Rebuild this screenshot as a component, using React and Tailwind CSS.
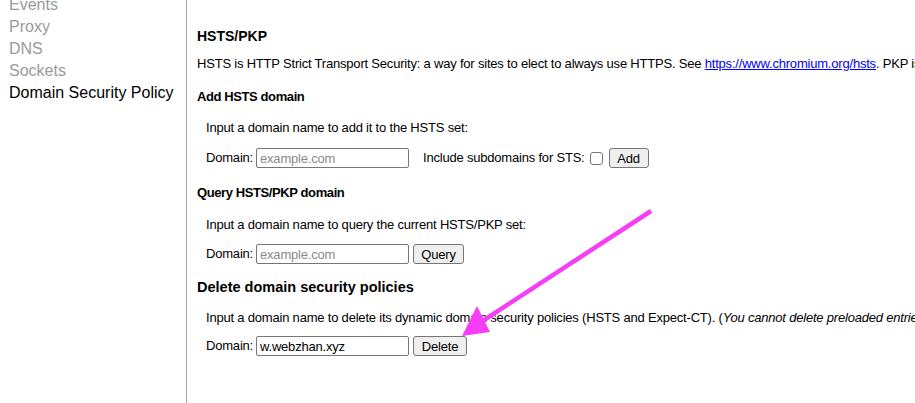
import React from "react";

const navItems = ["Events", "Proxy", "DNS", "Sockets", "Domain Security Policy"];

function DomainRow({ value, placeholder, className = "mt-[12px]", children }) {
  return (
    <div className={"flex h-[20px] items-center " + className}>
      <span className="mr-[3px]">Domain:</span>
      <input
        className="h-[20px] w-[153px] rounded-[2px] border border-[#767676] px-[3px] text-[13px] text-black outline-none placeholder:text-[#8a8a8a]"
        placeholder={placeholder}
        defaultValue={value}
      />
      {children}
    </div>
  );
}

function Btn({ label, className = "" }) {
  return (
    <button
      className={
        "ml-[4px] h-[20px] rounded-[3px] border border-[#767676] bg-[#efefef] px-[6px] text-[13px] leading-none text-black " +
        className
      }
    >
      {label}
    </button>
  );
}

export default function App() {
  return (
    <div
      className="relative flex h-[403px] w-[915px] overflow-hidden bg-white text-black"
      style={{ fontFamily: '"Liberation Sans", Arial, sans-serif' }}
    >
      <nav className="w-[187px] shrink-0 border-r border-[#a8a8a8]">
        <ul className="-mt-[6px] pl-[9px] text-[16px] leading-[22px]">
          {navItems.map((item, i) => (
            <li
              key={item}
              className={i === navItems.length - 1 ? "text-black" : "text-[#9a9a9a]"}
            >
              {item}
            </li>
          ))}
        </ul>
      </nav>

      <main className="min-w-0 flex-1 overflow-hidden pl-[10px] pt-[28px] text-[13px] leading-[16px] tracking-[-0.2px]">
        <h2 className="text-[14px] font-bold leading-[17px] tracking-normal">HSTS/PKP</h2>
        <p className="mt-[11px] whitespace-nowrap">
          HSTS is HTTP Strict Transport Security: a way for sites to elect to always use HTTPS. See{" "}
          <a href="#" className="text-[#0000ee] underline">
            https://www.chromium.org/hsts
          </a>
          . PKP is Public Key Pinning: Chrome "pins" certain sites to certain certificates.
        </p>

        <h3 className="mt-[17px] font-bold tracking-[-0.4px]">Add HSTS domain</h3>
        <div className="pl-[9px]">
          <p className="mt-[15px]">Input a domain name to add it to the HSTS set:</p>
          <DomainRow placeholder="example.com">
            <span className="ml-[14px]">Include subdomains for STS:</span>
            <span className="ml-[5px] h-[13px] w-[13px] rounded-[3px] border border-[#767676] bg-white" />
            <Btn label="Add" className="ml-[6px] w-[40px]" />
          </DomainRow>
        </div>

        <h3 className="mt-[17px] font-bold tracking-[-0.4px]">Query HSTS/PKP domain</h3>
        <div className="pl-[9px]">
          <p className="mt-[16px]">Input a domain name to query the current HSTS/PKP set:</p>
          <DomainRow placeholder="example.com" className="mt-[11px]">
            <Btn label="Query" className="w-[51px]" />
          </DomainRow>
        </div>

        <h3 className="mt-[15px] text-[14.5px] font-bold leading-[17px] tracking-normal">
          Delete domain security policies
        </h3>
        <div className="pl-[9px]">
          <p className="mt-[14px] whitespace-nowrap">
            Input a domain name to delete its dynamic domain security policies (HSTS and Expect-CT). (
            <i>You cannot delete preloaded entries.</i>)
          </p>
          <DomainRow value="w.webzhan.xyz" className="mt-[10px]">
            <Btn label="Delete" className="w-[54px]" />
          </DomainRow>
        </div>
      </main>

      <svg
        className="pointer-events-none absolute left-0 top-0"
        width="915"
        height="403"
        viewBox="0 0 915 403"
      >
        <line x1="651" y1="211" x2="478" y2="324" stroke="#f53ef5" strokeWidth="4.5" />
        <polygon points="462,336 477,306 490,332" fill="#f53ef5" />
      </svg>
    </div>
  );
}
